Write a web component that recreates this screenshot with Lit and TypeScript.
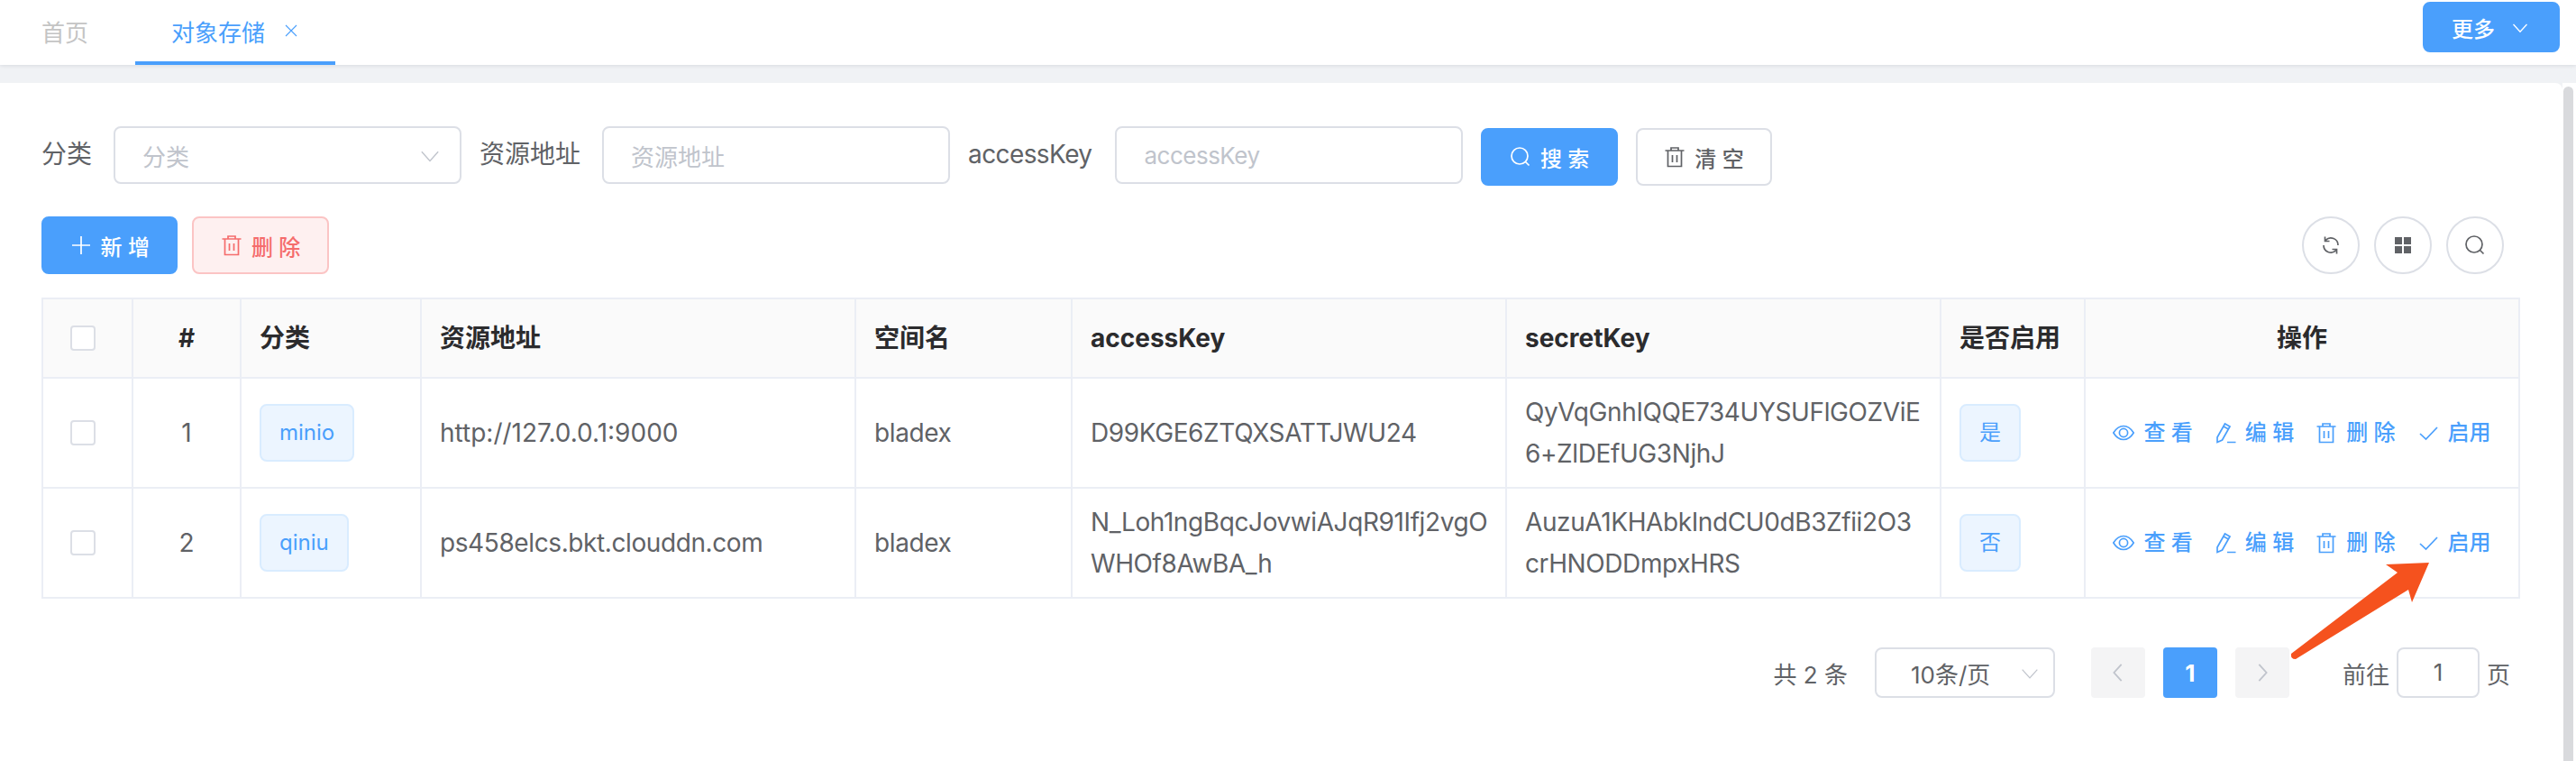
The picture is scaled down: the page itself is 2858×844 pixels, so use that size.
import { LitElement, css, html, svg } from "lit";
import { customElement } from "lit/decorators.js";

const icon = (body: unknown, cls = "") => html`<svg class="icon ${cls}" viewBox="0 0 24 24">${body}</svg>`;

const searchIcon = () => icon(svg`<circle cx="11" cy="11" r="9"/><path d="M17.5 17.5 21.5 21.5"/>`);
const trashIcon = () => icon(svg`<path d="M1.5 5H22.5M8 5V2H16V5M4.5 5V22.5H19.5V5M9.5 10V18M14.5 10V18"/>`);
const plusIcon = () => icon(svg`<path d="M12 2V22M2 12H22"/>`);
const eyeIcon = () => icon(svg`<path d="M.8 12C4 6.8 8 4.5 12 4.5s8 2.3 11.2 7.5C20 17.2 16 19.5 12 19.5S4 17.2.8 12Z"/><circle cx="12" cy="12" r="4.6"/>`);
const editIcon = () => icon(svg`<path d="M3 17 11.5 2 17 5 8.5 20 3 22.5ZM10 5 15.5 8M14 22.5H23.5"/>`);
const checkIcon = () => icon(svg`<path d="M3 13 9.5 19 22 6"/>`);
const chevron = (cls = "") => icon(svg`<path d="M2 8 12 19 22 8"/>`, cls);
const closeIcon = () => icon(svg`<path d="M4 4 20 20M20 4 4 20"/>`, "close");
const refreshIcon = () => icon(svg`<path d="M6.3 6.3A8 8 0 0 1 20 12M5.5 2.5V7.5H10.5M4 12A8 8 0 0 0 17.7 17.7M18.5 21.5V16.5H13.5"/>`);
const gridIcon = () => icon(svg`<g class="solid"><rect x="3" y="3" width="8" height="8"/><rect x="13" y="3" width="8" height="8"/><rect x="3" y="13" width="8" height="8"/><rect x="13" y="13" width="8" height="8"/></g>`);

const rows = [
  { no: 1, kind: "minio", url: "http://127.0.0.1:9000", space: "bladex", access: "D99KGE6ZTQXSATTJWU24", secret: "QyVqGnhIQQE734UYSUFlGOZViE\n6+ZlDEfUG3NjhJ", on: "是" },
  { no: 2, kind: "qiniu", url: "ps458elcs.bkt.clouddn.com", space: "bladex", access: "N_Loh1ngBqcJovwiAJqR91Ifj2vgO\nWHOf8AwBA_h", secret: "AuzuA1KHAbkIndCU0dB3Zfii2O3\ncrHNODDmpxHRS", on: "否" },
];

@customElement("app-root")
export class AppRoot extends LitElement {
  static styles = css`
    :host {
      display: block;
      position: relative;
      width: 2858px;
      height: 844px;
      overflow: hidden;
      background: #fff;
      font-family: Inter, "Noto Sans CJK SC", sans-serif;
      font-size: 28px;
      color: #606266;
    }
    * { box-sizing: border-box; }
    .icon {
      width: 24px;
      height: 24px;
      flex: none;
      fill: none;
      stroke: currentColor;
      stroke-width: 1.7;
    }
    .solid { fill: currentColor; stroke: none; }

    /* tabs */
    .tabbar {
      position: relative;
      z-index: 1;
      height: 72px;
      display: flex;
      justify-content: space-between;
      padding: 0 18px 0 6px;
      background: #fff;
      box-shadow: 0 1px 4px rgba(0, 21, 41, 0.1);
    }
    .tabs { display: flex; }
    .tab {
      display: flex;
      align-items: center;
      gap: 20px;
      height: 72px;
      padding: 0 40px;
      margin-right: 12px;
      font-size: 26px;
      color: #c4c4c4;
      border-bottom: 4px solid transparent;
    }
    .tab.active { color: #4a9ffc; border-bottom-color: #4a9ffc; }
    .close { width: 18px; height: 18px; stroke-width: 1.5; }

    /* buttons */
    .btn {
      display: inline-flex;
      align-items: center;
      gap: 10px;
      height: 64px;
      padding: 0 29.5px;
      border: 2px solid #dcdfe6;
      border-radius: 8px;
      background: #fff;
      color: #606266;
      font-size: 24px;
      font-weight: 500;
      white-space: pre;
    }
    .btn.primary { background: #4a9ffc; border-color: #4a9ffc; color: #fff; }
    .btn.danger { background: #fef0f0; border-color: #fbc4c4; color: #f56c6c; }
    .more { height: 56px; margin-top: 2px; gap: 19px; width: 152px; padding: 0 30px; }
    .more .icon { width: 18px; height: 18px; stroke-width: 1.8; }

    /* page */
    .main {
      display: flex;
      height: 772px;
      padding-top: 20px;
      background: #f0f2f5;
    }
    .card {
      flex: 1;
      padding: 48px 47px 0 46px;
      background: #fff;
      border-top-right-radius: 8px;
    }
    .track {
      width: 15px;
      padding: 4px 3px 0 1px;
      background: #fff;
    }
    .thumb { height: 100%; background: #d9dadd; border-radius: 6px 6px 0 0; }

    /* search form */
    .form { display: flex; align-items: flex-start; height: 66px; }
    .label { height: 64px; line-height: 62px; margin-right: 24px; white-space: nowrap; }
    .label.latin { letter-spacing: -0.6px; margin-right: 26px; }
    .field {
      display: flex;
      align-items: center;
      justify-content: space-between;
      width: 386px;
      height: 64px;
      margin-right: 20px;
      padding: 0 22px 0 30px;
      border: 2px solid #dcdfe6;
      border-radius: 8px;
      background: #fff;
      font-size: 26px;
      color: #c0c4cc;
    }
    .field.latin { letter-spacing: -0.5px; }
    .field .icon { width: 22px; height: 22px; stroke-width: 1.5; }
    .form .btn { margin-top: 2px; margin-right: 20px; }

    /* toolbar */
    .toolbar {
      display: flex;
      align-items: center;
      gap: 16px;
      height: 64px;
      margin-top: 34px;
      margin-bottom: 26px;
      padding-right: 18px;
    }
    .spacer { flex: 1; }
    .circle {
      display: flex;
      align-items: center;
      justify-content: center;
      width: 64px;
      height: 64px;
      border: 2px solid #dcdfe6;
      border-radius: 50%;
      color: #606266;
    }

    /* table */
    table {
      width: 2750px;
      table-layout: fixed;
      border-collapse: separate;
      border-spacing: 0;
      border-top: 2px solid #ebeef5;
      border-left: 2px solid #ebeef5;
    }
    th, td {
      padding: 0 20px;
      border-right: 2px solid #ebeef5;
      border-bottom: 2px solid #ebeef5;
      text-align: left;
      line-height: 46px;
    }
    th { height: 88px; background: #fafafa; color: #2b2b2d; font-weight: 700; }
    td { height: 122px; }
    .center { text-align: center; }
    th.check, td.check { padding-left: 30px; }
    .text { letter-spacing: -0.4px; white-space: pre-line; }
    .text.numeric { letter-spacing: 0; }
    .box {
      display: block;
      width: 28px;
      height: 28px;
      border: 2px solid #dcdfe6;
      border-radius: 4px;
      background: #fff;
    }
    .tag {
      display: inline-block;
      height: 64px;
      padding: 0 20px;
      line-height: 60px;
      font-size: 24px;
      color: #4a9ffc;
      background: #ecf5ff;
      border: 2px solid #d9ecff;
      border-radius: 8px;
      vertical-align: middle;
    }
    .actions {
      display: flex;
      justify-content: center;
      gap: 24px;
      font-size: 24px;
      font-weight: 500;
      color: #4a9ffc;
      white-space: pre;
    }
    .action { display: flex; align-items: center; gap: 10px; }

    /* pager */
    .pager {
      display: flex;
      align-items: center;
      height: 56px;
      margin-top: 54px;
      padding-right: 11px;
      justify-content: flex-end;
      font-size: 26px;
    }
    .page-size {
      display: flex;
      align-items: center;
      justify-content: space-between;
      width: 200px;
      height: 56px;
      margin: 0 40px 0 30px;
      padding: 0 16px 0 38px;
      border: 2px solid #dcdfe6;
      border-radius: 8px;
    }
    .page-size .icon { width: 20px; height: 20px; color: #c0c4cc; stroke-width: 1.5; }
    .page {
      display: flex;
      align-items: center;
      justify-content: center;
      width: 60px;
      height: 56px;
      margin-right: 20px;
      border-radius: 4px;
      background: #f4f4f5;
      color: #c0c4cc;
    }
    .page .icon { width: 22px; height: 26px; stroke-width: 2; }
    .page.current { background: #4a9ffc; color: #fff; font-weight: 700; }
    .page.last { margin-right: 59px; }
    .goto {
      width: 92px;
      height: 56px;
      margin: 0 8px;
      line-height: 52px;
      text-align: center;
      border: 2px solid #dcdfe6;
      border-radius: 8px;
    }

    .arrow { position: absolute; left: 2530px; top: 615px; width: 180px; height: 125px; }
  `;

  renderRow(row: (typeof rows)[number]) {
    // ip addresses are mostly digits, those run wider in the reference
    const urlClass = /\d\.\d/.test(row.url) ? "text numeric" : "text";
    return html`
      <tr>
        <td class="check"><span class="box"></span></td>
        <td class="center">${row.no}</td>
        <td><span class="tag">${row.kind}</span></td>
        <td><span class=${urlClass}>${row.url}</span></td>
        <td><span class="text">${row.space}</span></td>
        <td><span class="text">${row.access}</span></td>
        <td><span class="text">${row.secret}</span></td>
        <td><span class="tag">${row.on}</span></td>
        <td>
          <div class="actions">
            <span class="action">${eyeIcon()}查 看</span>
            <span class="action">${editIcon()}编 辑</span>
            <span class="action">${trashIcon()}删 除</span>
            <span class="action">${checkIcon()}启用</span>
          </div>
        </td>
      </tr>
    `;
  }

  render() {
    return html`
      <div class="tabbar">
        <div class="tabs">
          <div class="tab">首页</div>
          <div class="tab active">对象存储${closeIcon()}</div>
        </div>
        <div class="btn primary more">更多${chevron()}</div>
      </div>
      <div class="main">
        <div class="card">
          <div class="form">
            <span class="label">分类</span>
            <div class="field">分类${chevron()}</div>
            <span class="label">资源地址</span>
            <div class="field">资源地址</div>
            <span class="label latin">accessKey</span>
            <div class="field latin">accessKey</div>
            <div class="btn primary">${searchIcon()}搜 索</div>
            <div class="btn">${trashIcon()}清 空</div>
          </div>
          <div class="toolbar">
            <div class="btn primary">${plusIcon()}新 增</div>
            <div class="btn danger">${trashIcon()}删 除</div>
            <div class="spacer"></div>
            <div class="circle">${refreshIcon()}</div>
            <div class="circle">${gridIcon()}</div>
            <div class="circle">${searchIcon()}</div>
          </div>
          <table>
            <colgroup>
              <col style="width:100px" /><col style="width:120px" /><col style="width:200px" />
              <col style="width:482px" /><col style="width:240px" /><col style="width:482px" />
              <col style="width:482px" /><col style="width:160px" /><col style="width:482px" />
            </colgroup>
            <thead>
              <tr>
                <th class="check"><span class="box"></span></th>
                <th class="center">#</th>
                <th>分类</th>
                <th>资源地址</th>
                <th>空间名</th>
                <th>accessKey</th>
                <th>secretKey</th>
                <th>是否启用</th>
                <th class="center">操作</th>
              </tr>
            </thead>
            <tbody>${rows.map((r) => this.renderRow(r))}</tbody>
          </table>
          <div class="pager">
            <span>共 2 条</span>
            <div class="page-size">10条/页${chevron()}</div>
            <div class="page">${icon(svg`<path d="M16 2 7 12 16 22"/>`)}</div>
            <div class="page current">1</div>
            <div class="page last">${icon(svg`<path d="M8 2 17 12 8 22"/>`)}</div>
            <span>前往</span>
            <div class="goto">1</div>
            <span>页</span>
          </div>
        </div>
        <div class="track"><div class="thumb"></div></div>
      </div>
      <svg class="arrow" viewBox="2530 615 180 125">
        <path fill="#f5521e" d="M2695 624 2647 626 2660 635 2542 725Q2541 731 2547 731L2672 654 2676 668Z" />
      </svg>
    `;
  }
}
